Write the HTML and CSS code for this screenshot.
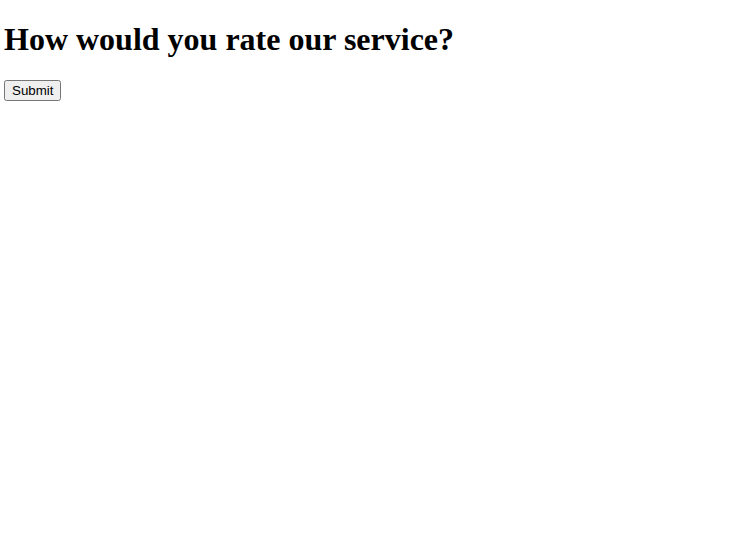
FILE: index.html
```html
<!DOCTYPE html>
<html>
<head>
<meta charset="utf-8">
<link rel="stylesheet" href="styles.css">
</head>
<body class="page">
<h1 class="title">How would you rate our service?</h1>
<form class="rating-form">
<button type="button" class="submit">Submit</button>
</form>
</body>
</html>
```
FILE: styles.css
```css
.page {
  margin: 4px;
  font-family: "Liberation Serif", serif;
  background: #fff;
  color: #000;
}
.title {
  font-size: 32px;
  font-weight: bold;
  margin: 17.44px 0 21.44px;
}
.rating-form {
  margin: 0;
}
.submit {
  font-family: "Liberation Sans", Arial, sans-serif;
  font-size: 13.333px;
}
```
